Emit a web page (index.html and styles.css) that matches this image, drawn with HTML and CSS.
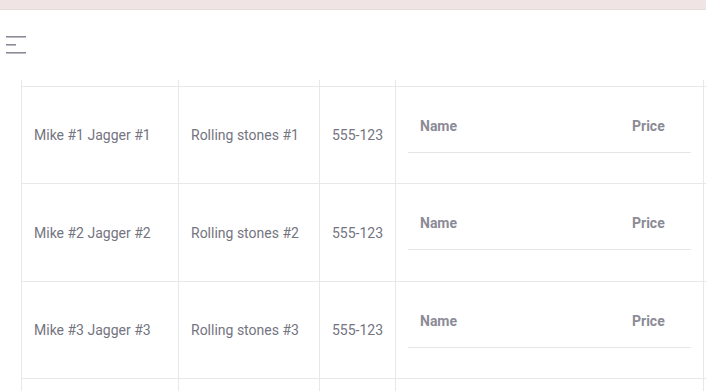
FILE: index.html
```html
<!DOCTYPE html>
<html lang="en">
<head>
<meta charset="utf-8">
<title>Bands</title>
<link rel="stylesheet" href="styles.css">
</head>
<body>
<div class="topbar"></div>
<header class="header">
  <button class="menu-btn" aria-label="Menu">
    <svg width="22" height="20" viewBox="0 0 22 20" aria-hidden="true">
      <rect x="0" y="1" width="20" height="1.6" fill="#8c8c98"/>
      <rect x="0" y="9" width="10" height="1.6" fill="#8c8c98"/>
      <rect x="0" y="17" width="20" height="1.6" fill="#8c8c98"/>
    </svg>
  </button>
</header>
<main class="table-wrap">
  <div class="grid">
    <div class="cell spacer"></div><div class="cell spacer"></div><div class="cell spacer"></div><div class="cell spacer"></div><div class="cell spacer"></div>

    <div class="cell">Mike #1 Jagger #1</div>
    <div class="cell">Rolling stones #1</div>
    <div class="cell">555-123</div>
    <div class="cell nested-cell">
      <div class="nested"><div class="nh">Name</div><div class="nh">Price</div></div>
    </div>
    <div class="cell"></div>

    <div class="cell">Mike #2 Jagger #2</div>
    <div class="cell">Rolling stones #2</div>
    <div class="cell">555-123</div>
    <div class="cell nested-cell">
      <div class="nested"><div class="nh">Name</div><div class="nh">Price</div></div>
    </div>
    <div class="cell"></div>

    <div class="cell">Mike #3 Jagger #3</div>
    <div class="cell">Rolling stones #3</div>
    <div class="cell">555-123</div>
    <div class="cell nested-cell">
      <div class="nested"><div class="nh">Name</div><div class="nh">Price</div></div>
    </div>
    <div class="cell"></div>

    <div class="cell"></div>
    <div class="cell"></div>
    <div class="cell"></div>
    <div class="cell"></div>
    <div class="cell"></div>
  </div>
</main>
</body>
</html>
```
FILE: styles.css
```css
html, body {
  margin: 0;
  padding: 0;
  height: 100%;
  overflow: hidden;
  background: #ffffff;
  font-family: Roboto, "Liberation Sans", Arial, sans-serif;
}

.topbar {
  height: 9px;
  background: #f0e4e5;
  border-bottom: 1px solid #e6dcdc;
}

.header {
  height: 70px;
  display: flex;
  align-items: center;
  padding-left: 6px;
}

.menu-btn {
  border: 0;
  background: none;
  padding: 0;
  margin: 0;
  display: flex;
  margin-top: -1px;
}

.table-wrap {
  padding-left: 21px;
}

.grid {
  display: grid;
  grid-template-columns: 157px 141px 76px 308px 120px;
  grid-template-rows: 7px 97px 98px 97px 97px;
  width: max-content;
}

.cell {
  border-left: 1px solid #e8e8ec;
  border-bottom: 1px solid #e8e8ec;
  padding: 0 12px;
  display: flex;
  align-items: center;
  font-size: 14px;
  color: #74747f;
  white-space: nowrap;
  box-sizing: border-box;
}

.spacer {
  padding: 0;
}

.nested-cell {
  align-items: flex-start;
  padding-top: 13px;
}

.nested {
  display: grid;
  grid-template-columns: 212px 71px;
  width: 283px;
  border-bottom: 1px solid #e6e6ea;
}

.nh {
  height: 52px;
  display: flex;
  align-items: center;
  padding-left: 12px;
  font-size: 14px;
  font-weight: 700;
  color: #8b8b96;
}
```
